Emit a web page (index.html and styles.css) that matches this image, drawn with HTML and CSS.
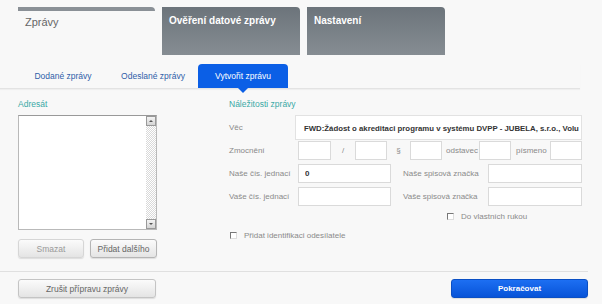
FILE: index.html
```html
<!DOCTYPE html>
<html lang="cs">
<head>
  <meta charset="UTF-8" />
  <title>Vytvořit zprávu</title>
  <link rel="stylesheet" href="styles.css">
</head>
<body>
  <div class="page">
    <div class="main-tabs">
      <div class="main-tab active">Zprávy</div>
      <div class="main-tab">Ověření datové zprávy</div>
      <div class="main-tab">Nastavení</div>
    </div>

    <div class="sub-tabs">
      <div class="sub-tab">Dodané zprávy</div>
      <div class="sub-tab">Odeslané zprávy</div>
      <div class="sub-tab active">Vytvořit zprávu</div>
    </div>

    <div class="content">
      <div class="left-col">
        <div class="section-title">Adresát</div>
        <div class="listbox">
          <div class="scrollbar">
            <span class="scroll-btn up"></span>
            <span class="scroll-btn down"></span>
          </div>
        </div>
        <div class="list-buttons">
          <button class="btn disabled">Smazat</button>
          <button class="btn">Přidat dalšího</button>
        </div>
      </div>

      <div class="right-col">
        <div class="section-title">Náležitosti zprávy</div>

        <div class="row subject-row">
          <span class="label">Věc</span>
          <div class="subject"><span class="subject-text">FWD:Žádost o akreditaci programu v systému DVPP - JUBELA, s.r.o., Volu</span></div>
        </div>

        <div class="row">
          <span class="label">Zmocnění</span>
          <input class="field w33" type="text" />
          <span class="sep w24">/</span>
          <input class="field w32" type="text" />
          <span class="sep w23">§</span>
          <input class="field w32" type="text" />
          <span class="sep-text w37">odstavec</span>
          <input class="field w32" type="text" />
          <span class="sep-text w39">písmeno</span>
          <input class="field w32" type="text" />
        </div>

        <div class="row">
          <span class="label">Naše čís. jednací</span>
          <input class="field w93" type="text" value="0" />
          <span class="label second">Naše spisová značka</span>
          <input class="field w94" type="text" />
        </div>

        <div class="row">
          <span class="label">Vaše čís. jednací</span>
          <input class="field w93" type="text" />
          <span class="label second">Vaše spisová značka</span>
          <input class="field w94" type="text" />
        </div>

        <label class="check own-hands"><span class="box"></span>Do vlastních rukou</label>
        <label class="check sender"><span class="box"></span>Přidat identifikaci odesílatele</label>
      </div>
    </div>

    <div class="footer">
      <button class="btn wide">Zrušit přípravu zprávy</button>
      <button class="btn primary wide">Pokračovat</button>
    </div>
  </div>
</body>
</html>
```

FILE: styles.css
```css
body {
  margin: 0;
  background-color: #f8f8f8;
  font-family: "Liberation Sans", Arial, sans-serif;
  color: #666;
}

.page {
  width: 602px;
  height: 304px;
  overflow: hidden;
}

/* top tabs */
.main-tabs {
  display: flex;
  gap: 7px;
  padding: 7px 0 0 18px;
  height: 48px;
}

.main-tab {
  width: 131px;
  padding: 8px 0 0 7px;
  font-size: 10px;
  font-weight: bold;
  line-height: 12px;
  color: #fff;
  background: linear-gradient(#6c747b, #868d93);
  border-radius: 0 4px 0 0;
}

.main-tab.active {
  width: 130px;
  padding-top: 5px;
  background: transparent;
  border-top: 4px solid #8a9096;
  color: #666;
  font-weight: normal;
  font-size: 11px;
}

/* sub tabs */
.sub-tabs {
  display: flex;
  margin: 9px 22px 0 0;
  padding-left: 18px;
  height: 24px;
  border-bottom: 1px solid #e3e3e3;
  box-shadow: 0 1px 1px #efefef;
}

.sub-tab {
  width: 90px;
  line-height: 24px;
  text-align: center;
  font-size: 8.5px;
  color: #2f5ea8;
}

.sub-tab.active {
  position: relative;
  background-color: #0b5fe6;
  color: #fff;
  border-radius: 4px 4px 0 0;
}

.sub-tab.active::after {
  content: "";
  position: absolute;
  left: 40px;
  top: 100%;
  border-top: 5px solid #0b5fe6;
  border-left: 5px solid transparent;
  border-right: 5px solid transparent;
}

/* content */
.content {
  display: flex;
  padding-left: 18px;
  height: 182px;
}

.section-title {
  margin: 9px 0 5px;
  line-height: 12px;
  font-size: 8.5px;
  color: #3aa9a6;
}

.left-col {
  width: 139px;
}

.listbox {
  position: relative;
  height: 113px;
  background-color: #fff;
  border: 1px solid #b9b9b9;
  border-top-color: #999;
}

.scrollbar {
  position: absolute;
  top: 0;
  right: 0;
  bottom: 0;
  width: 10px;
  background: repeating-conic-gradient(#d9d9d9 0 25%, #fff 0 50%) 0 0 / 2px 2px;
}

.scroll-btn {
  position: absolute;
  left: 0;
  width: 8px;
  height: 8px;
  background: linear-gradient(#f4f4f4, #d4d4d4);
  border: 1px solid #999;
}

.scroll-btn.up {
  top: 0;
}

.scroll-btn.down {
  bottom: 0;
}

.scroll-btn::after {
  content: "";
  position: absolute;
  left: 2px;
  top: 3px;
  border-left: 2px solid transparent;
  border-right: 2px solid transparent;
}

.scroll-btn.up::after {
  border-bottom: 2px solid #555;
}

.scroll-btn.down::after {
  border-top: 2px solid #555;
}

.list-buttons {
  display: flex;
  justify-content: space-between;
  margin-top: 9px;
}

.btn {
  height: 19px;
  padding: 0;
  font-family: "Liberation Sans", Arial, sans-serif;
  font-size: 8.5px;
  color: #666;
  background: linear-gradient(#fbfbfb, #e4e4e4);
  border: 1px solid #c4c4c4;
  border-radius: 3px;
  box-shadow: 0 1px 1px #ddd;
}

.list-buttons .btn {
  width: 66px;
}

.list-buttons .btn + .btn {
  width: 67px;
  border-color: #b5b5b5;
}

.btn.disabled {
  color: #999;
  border-color: #d6d6d6;
}

.right-col {
  width: 353px;
  margin-left: 72px;
}

.row {
  display: flex;
  align-items: center;
  height: 19px;
  margin-bottom: 4px;
}

.subject-row {
  height: 25px;
  margin-bottom: 1px;
}

.label {
  width: 69px;
  flex-shrink: 0;
  font-size: 8px;
  color: #8a8a8a;
  white-space: nowrap;
}

.label.second {
  width: 85px;
  margin-left: 12px;
}

.subject {
  flex: 1;
  height: 25px;
  margin-left: -3px;
  padding-left: 8px;
  line-height: 25px;
  font-size: 7.8px;
  font-weight: bold;
  color: #333;
  white-space: nowrap;
  overflow: hidden;
  background-color: #fff;
  border: 1px solid #e2e2e2;
  box-sizing: border-box;
}

.field {
  box-sizing: border-box;
  height: 19px;
  margin: 0;
  padding: 0 6px;
  font-family: "Liberation Sans", Arial, sans-serif;
  font-size: 8px;
  font-weight: bold;
  color: #333;
  background-color: #fff;
  border: 1px solid #dadada;
}

.sep,
.sep-text {
  flex-shrink: 0;
  font-size: 8px;
  color: #8a8a8a;
}

.sep {
  text-align: center;
}

.sep-text {
  padding-left: 4px;
  box-sizing: border-box;
}

.sep-text.w39 {
  padding-left: 5px;
}

.w23 { width: 23px; }
.w24 { width: 24px; }
.w32 { width: 32px; }
.w33 { width: 33px; }
.w37 { width: 37px; }
.w39 { width: 39px; }
.w93 { width: 93px; }
.w94 { width: 94px; }

.check {
  display: flex;
  align-items: center;
  gap: 7px;
  height: 12px;
  font-size: 8px;
  color: #8a8a8a;
}

.box {
  width: 5px;
  height: 5px;
  background-color: #fff;
  border: 1px solid #ddd;
  border-top-color: #777;
  border-left-color: #777;
}

.own-hands {
  margin: 3px 0 0 218px;
}

.sender {
  margin: 7px 0 0 1px;
}

/* footer */
.footer {
  display: flex;
  justify-content: space-between;
  margin-right: 14px;
  padding: 7px 0 0 18px;
  border-top: 1px solid #e0e0e0;
}

.btn.wide {
  width: 138px;
}

.btn.primary {
  width: 137px;
  font-size: 8px;
  font-weight: bold;
  color: #fff;
  background: linear-gradient(#1d6ff2, #0753d8);
  border-color: #0a4fc4;
}
```
